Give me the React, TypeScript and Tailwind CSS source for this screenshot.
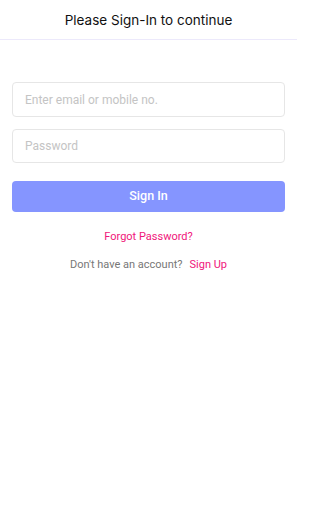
export default function App() {
  return (
    <div className="w-[297px] min-h-screen bg-white" style={{ fontFamily: 'Roboto, "Liberation Sans", sans-serif' }}>
      <div className="h-10 flex items-center justify-center border-b border-[#ece9fb]">
        <h1 className="text-[13.5px] text-[#111] font-[Inter,Roboto,sans-serif] pt-[1px]">Please Sign-In to continue</h1>
      </div>

      <div className="px-3 pt-[42px]">
        <input
          placeholder="Enter email or mobile no."
          className="block w-full h-[35px] border border-[#e6e6e6] rounded-[4px] px-3 text-[12px] text-[#333] placeholder:text-[#c4c4c4] outline-none"
        />
        <input
          type="password"
          placeholder="Password"
          className="block w-full h-[34px] mt-[12px] border border-[#e6e6e6] rounded-[4px] px-3 text-[12px] text-[#333] placeholder:text-[#c4c4c4] outline-none"
        />
        <button className="block w-full h-[31px] mt-[18px] bg-[#8595ff] text-white text-[12.5px] font-medium rounded-[4px]">
          Sign In
        </button>
        <p className="text-center text-[11px] text-[#f0157a] mt-[17px]">Forgot Password?</p>
        <p className="text-center text-[11px] text-[#777] mt-[11px]">
          Don't have an account?<span className="text-[#f0157a] ml-[7px]">Sign Up</span>
        </p>
      </div>
    </div>
  )
}
